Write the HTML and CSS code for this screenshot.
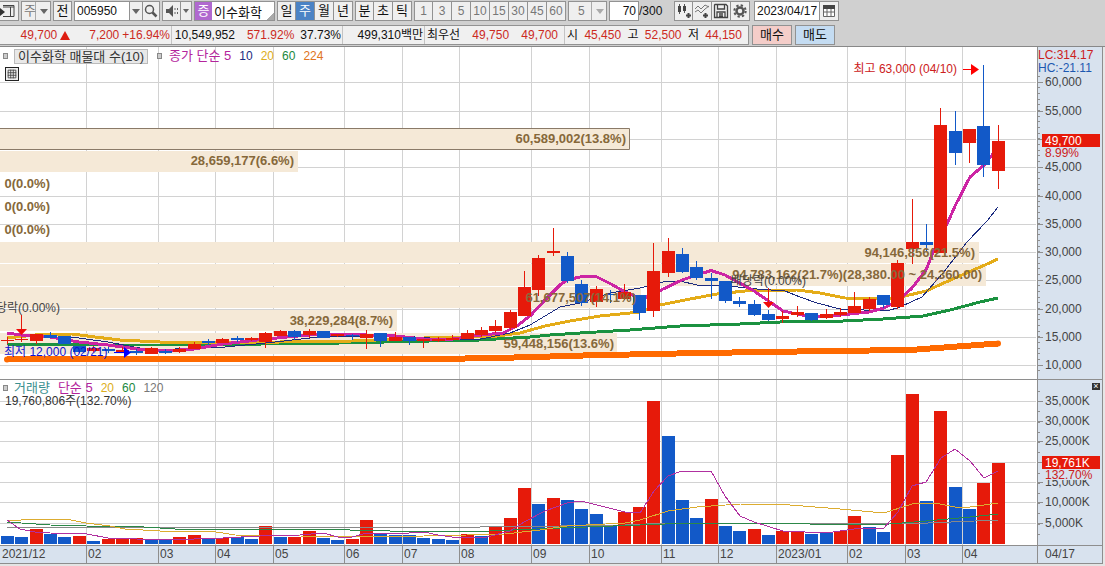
FILE: index.html
```html
<!DOCTYPE html>
<html lang="ko">
<head>
<meta charset="utf-8">
<title>이수화학 주봉 차트</title>
<link rel="stylesheet" href="styles.css">
</head>
<body>
<header class="toolbar">
  <button class="tool first" aria-label="패널"><svg width="18" height="16" viewBox="0 0 18 16"><path d="M3 2.5h11v11H3M3 4h11M10.5 4v9" fill="none" stroke="#444"/><path d="M0 5l5 4-5 4z" fill="#333"/></svg></button>
  <span class="combo period"><select aria-label="주기"><option>주</option></select><i class="arrow"></i></span>
  <button class="tool">전</button>
  <span class="group">
    <input class="field code" value="005950" aria-label="종목코드">
    <button class="drop" aria-label="종목 목록"><i class="arrow"></i></button>
    <button class="tool" aria-label="검색"><svg width="16" height="16" viewBox="0 0 16 16" fill="none" stroke="#555"><circle cx="6.500" cy="6.500" r="4" stroke-width="1.500"/><path d="M9.500 9.500l4 4" stroke-width="2.500"/></svg></button>
  </span>
  <span class="group">
    <button class="tool" aria-label="소리"><svg width="16" height="16" viewBox="0 0 16 16"><path d="M2 6h3l4-4v12l-4-4H2z" fill="#555"/><path d="M11 5v2M11 9v2M13.500 5v2M13.500 9v2" stroke="#666"/></svg></button>
    <button class="drop slim" aria-label="소리 설정"><i class="arrow"></i></button>
  </span>
  <span class="group name">
    <b class="badge">증</b>
    <input class="field" value="이수화학" aria-label="종목명">
  </span>
  <span class="group cells">
    <button>일</button><button class="on">주</button><button>월</button><button>년</button>
  </span>
  <span class="group cells">
    <button>분</button><button>초</button><button>틱</button>
  </span>
  <span class="group cells dim">
    <button>1</button><button>3</button><button>5</button><button>10</button><button>15</button><button>30</button><button>45</button><button>60</button>
  </span>
  <span class="combo minutes"><select aria-label="분 단위" disabled><option>5</option></select><i class="arrow"></i></span>
  <label class="count"><input class="field" value="70" aria-label="봉 개수">/300</label>
  <span class="group icons">
    <button class="tool" aria-label="봉 추가"><svg width="16" height="16" viewBox="0 0 16 16"><path d="M3.500 1v10M8.500 1v9" stroke="#555"/><path d="M2 3h3v6H2zM7 3h3v5H7z" fill="#444"/><path d="M10 12.500h5M12.500 10v5" stroke="#444" stroke-width="2"/></svg></button>
    <button class="tool" aria-label="지표 추가"><svg width="16" height="16" viewBox="0 0 16 16" fill="none"><path d="M1 6l3-3 3 3 4-4 4 2M1 9l3-2 3 3 4-4 4-3" stroke="#777"/><path d="M9 12.500h5M11.500 10v5" stroke="#444" stroke-width="2"/></svg></button>
    <button class="tool" aria-label="저장"><svg width="16" height="16" viewBox="0 0 16 16" fill="none" stroke="#444"><path d="M2 1.500h11l1.500 1.500v11.500h-13V2zM4.500 2v4h7V2M4 14.500V9h8v5.500M6 11h4M6 13h4" stroke-width="1.300"/></svg></button>
    <button class="tool" aria-label="설정"><svg width="16" height="16" viewBox="0 0 16 16" fill="none" stroke="#555"><circle cx="8" cy="8" r="3.500" stroke-width="2.500"/><circle cx="8" cy="8" r="5.700" stroke-width="2" stroke-dasharray="2.300 2.176"/></svg></button>
  </span>
  <span class="group">
    <input class="field date" value="2023/04/17" aria-label="날짜">
    <button class="tool" aria-label="달력"><svg width="16" height="16" viewBox="0 0 16 16"><path d="M2.500 3.500h11v10h-11zM6 5v8M10 5v8M3 9h10" fill="#fff" stroke="#666"/><path d="M2 2h12v4H2z" fill="#444"/></svg></button>
  </span>
</header>

<section class="quote">
  <div class="ticker">
    <div class="cell c1"><span class="up last">49,700</span><i class="rise"></i><span class="up diff">7,200</span><span class="up">+16.94%</span></div>
    <div class="cell c2"><span class="vol">10,549,952</span><span class="up">571.92%</span><span>37.73%</span></div>
    <div class="cell c3"><span>499,310백만</span></div>
    <div class="cell c4"><span>최우선</span><span class="up">49,750</span><span class="up">49,700</span></div>
    <div class="cell c5"><span>시</span><span class="up">45,450</span><span>고</span><span class="up">52,500</span><span>저</span><span class="up">44,150</span></div>
  </div>
  <button class="trade buy">매수</button>
  <button class="trade sell">매도</button>
</section>

<main class="chart">
  <svg id="plot" class="plot" viewBox="0 47 1105 517" role="img" aria-label="이수화학 주봉 가격과 거래량"></svg>
  <div class="legend price-legend">
    <i class="mark"></i><span class="profile">이수화학 매물대 수(10)</span><i class="mark"></i>
    <span class="m5">종가 단순 5</span><span class="m10">10</span><span class="m20">20</span><span class="m60">60</span><span class="m224">224</span>
  </div>
  <button class="grid-button" aria-label="표 보기"><svg width="14" height="14" viewBox="0 0 14 14"><path d="M2.500 2.500h9v9h-9zM2 5.500h10M2 8.500h10M5.500 2v10M8.500 2v10" fill="none" stroke="#444"/></svg></button>
  <div class="legend volume-legend">
    <i class="mark"></i><span class="vtitle">거래량</span>
    <span class="m5">단순 5</span><span class="m20">20</span><span class="m60">60</span><span class="m120">120</span>
  </div>
  <div class="volume-now">19,760,806주(132.70%)</div>
  <button class="close" aria-label="닫기">×</button>
</main>
<footer class="foot"></footer>
<script src="chart.js"></script>
</body>
</html>
```
FILE: styles.css
```css
* { box-sizing: border-box; }
body {
  margin: 0;
  background: #d0d0d0;
  color: #111;
  font: 13px/16px "Liberation Sans", "Noto Sans CJK KR", sans-serif;
}
button, input, select { font: inherit; color: inherit; margin: 0; padding: 0; border-radius: 0; }
i { font-style: normal; }

.toolbar { display: flex; align-items: center; gap: 2px; height: 24px; padding-bottom: 2px; }
.group { display: flex; }
.tool, .drop, .cells button {
  display: flex; align-items: center; justify-content: center;
  width: 19px; height: 20px;
  border: 1px solid #929292; background: #efefef;
}
.tool + .tool, .cells button + button, .field + .tool { border-left: 0; }
.first { border-left: 0; }
.drop { width: 14px; }
.slim { width: 11px; border-left: 0; }
.group .drop + .tool { width: 17px; border-left: 0; }
.arrow { width: 0; height: 0; border: 4px solid transparent; border-top: 5px solid #666; border-bottom: 0; }
.slim .arrow { border-width: 4px 3px 0; }
.combo { position: relative; display: flex; height: 20px; }
.combo select { appearance: none; border: 1px solid #929292; background: linear-gradient(90deg, #efefef calc(100% - 15px), #aaa calc(100% - 15px), #aaa calc(100% - 14px), #efefef calc(100% - 14px)); color: #777; padding-left: 2px; opacity: 1; }
.combo .arrow { position: absolute; right: 3px; top: 8px; }
.period select { width: 30px; }
.minutes select { width: 39px; padding-left: 9px; font-size: 12px; }
.minutes .arrow { border-top-color: #aaa; }
.field { height: 20px; border: 1px solid #929292; background: #fff; padding: 0 2px; min-width: 0; }
.code { width: 55px; border-right: 0; font-size: 12px; }
.name { width: 81px; border: 1px solid #929292; background: #fff; }
.name .field { border: 0; height: 18px; width: 62px; background: linear-gradient(135deg, #fff 91%, #aaa 91%); }
.badge { width: 17px; background: #b069cf; color: #fff; font-weight: 400; text-align: center; line-height: 18px; }
.cells .on { background: #4b83c5; color: #fff; }
.dim { color: #777; font-size: 12px; }
.dim button { color: inherit; }
.count { display: flex; align-items: center; width: 63px; font-size: 12px; }
.count .field { width: 30px; text-align: right; }
.icons { margin-right: 2px; }
.date { width: 66px; font-size: 12px; }

.quote { display: flex; gap: 3px; height: 22px; padding: 1px 0 1px; }
.ticker { display: flex; width: 749px; border: 1px solid #929292; border-left: 0; background: #f0f0f0; white-space: nowrap; font-size: 12px; }
.cell { display: flex; align-items: center; justify-content: flex-end; gap: 6px; padding-right: 1px; border-right: 1px solid #c4c4c4; }
.cell:last-child { border-right: 0; }
.up { color: #cc2a1e; }
.rise { width: 0; height: 0; border: 5px solid transparent; border-bottom: 9px solid #dd1c10; border-top: 0; }
.c1 { width: 172px; gap: 3px; }
.c1 .diff { width: 46px; text-align: right; }
.c2 { width: 171px; }
.c2 .vol { margin-right: 6px; }
.c3 { width: 82px; }
.c4 { width: 140px; padding: 0 6px 0 2px; justify-content: space-between; }
.c5 { flex: 1; justify-content: space-between; padding: 0 6px 0 2px; }
.trade { width: 40px; border: 1px solid #929292; }
.buy { background: #f4cdc9; }
.sell { background: #c4dcf2; }

.chart { position: relative; border-top: 1px solid #888; background: #fff; }
.plot { display: block; width: 100%; height: auto; }
.plot text { font: 12px "Liberation Sans", "Noto Sans CJK KR", sans-serif; }
.plot .axis { fill: #444; }
.plot .red { fill: #cc2020; }
.plot .blue { fill: #1c58b0; }
.plot .white { fill: #fff; }
.plot .profile-text { fill: #86683a; font-size: 13px; font-weight: 700; text-anchor: end; }
.plot .end { text-anchor: end; }
.legend { position: absolute; left: 3px; display: flex; align-items: center; gap: 8px; }
.price-legend { top: 1px; }
.volume-legend { top: 333px; }
.mark { width: 5px; height: 6px; border: 1px solid #888; background: #ccc; }
.price-legend .profile { margin-left: -2px; padding: 0 3px; margin-right: 1px; border: 1px solid #bbb; background: #e8e8e8; line-height: 13px; color: #333; }
.price-legend .m5 { margin-left: -1px; }
.volume-legend .vtitle { margin-left: -2px; color: #3a9090; }
.m5 { color: #b4249c; }
.m10 { color: #1c2c80; }
.m20 { color: #dcae20; }
.m60 { color: #1a8840; }
.m224 { color: #e07420; }
.m120 { color: #777; }
.m10, .m20, .m60, .m224, .m120 { font-size: 12px; }
.grid-button { position: absolute; left: 5px; top: 20px; width: 14px; height: 14px; border: 1px solid #222; background: #eee; display: flex; align-items: center; justify-content: center; }
.volume-now { position: absolute; left: 5px; top: 346px; color: #333; font-size: 12px; }
.close { position: absolute; right: 5px; top: 336px; width: 8px; height: 7px; border: 0; background: #333; color: #fff; font-size: 9px; line-height: 7px; }
.foot { height: 2px; background: #e4e4e4; }
```
FILE: chart.js
```js
const RED = '#e61a0a', BLUE = '#1259c8', GRID = '#d2d2d2', EDGE = '#8e8e8e', PANEL = '#d8e2ee', BAND = '#f5e9d7';
const out = [];
const cx = i => Math.round(7 + i * 14.36);
const rect = (x, y, w, h, fill) => out.push(`<rect x="${x}" y="${y}" width="${w}" height="${h}" fill="${fill}"/>`);
const text = (x, y, s, cls = '', fill = '') => out.push(`<text x="${x}" y="${y}" class="${cls}" ${fill && `fill="${fill}"`}>${s}</text>`);
const line = (pts, color, w) => out.push(`<polyline points="${pts}" fill="none" stroke="${color}" stroke-width="${w}" stroke-linejoin="round" shape-rendering="crispEdges"/>`);

// Panels and grid
rect(0, 47, 1037, 498, '#fff');
rect(1037, 47, 65, 517, PANEL);
rect(0, 546, 1102, 18, PANEL);
rect(1102, 47, 3, 517, '#e6e6e6');
const months = [[0, '2021/12'], [86, '02'], [158, '03'], [215, '04'], [273, '05'], [344, '06'], [402, '07'], [459, '08'], [531, '09'], [589, '10'], [661, '11'], [718, '12'], [776, '2023/01'], [847, '02'], [905, '03'], [962, '04']];
const priceY = [82, 111, 139, 167, 196, 224, 252, 280, 309, 337, 365];
const volumeY = [401, 421, 441, 462, 482, 502, 523];
priceY.concat(volumeY).forEach(y => rect(0, y, 1036, 1, GRID));
months.slice(1).forEach(([x]) => rect(x, 47, 1, 498, GRID));

// Volume profile bands
[[128, 630], [151, 298], [242, 979], [264, 986], [287, 641], [310, 397], [333, 617]].forEach(([y, w]) => rect(0, y, w, y === 264 ? 22 : 21, BAND));
out.push('<path d="M0 128.5H629.5V149.5H0" fill="none" stroke="#8a7a68"/>');

// Moving averages
line('7,359.5 440,359 540,357 560,356 700,353 830,351 910,350 998,343.5', '#ff6a00', 6);
out.push('<circle cx="7" cy="359.5" r="3" fill="#ff6a00"/><circle cx="998" cy="343.5" r="3" fill="#ff6a00"/>');
line('7,344 100,345 190,345 262,344 340,343 430,341 480,340 530,337 550,335 580,333 630,330 680,326 740,324 780,322 833,321.5 883,319 923,316 950,310 980,302 998,298', '#1b9240', 3);
line('7,338 35,335 72,334 95,337 120,340 160,342 194,343 280,342 352,341 424,338 467,337 497,336 520,333 545,326 570,321 600,316 640,312 660,305 690,299 717,294 745,291 797,290 820,293 845,298 885,299 905,296 926,291 955,278 985,265 998,259', '#e4ac18', 3);
line('64,336 108,342 150,350 200,348 225,347 266,343 310,338 340,336 400,336 430,338 460,340 481,339 510,333 530,325 560,307 580,303 610,293 640,288 663,282 680,281 697,285 718,285 757,289 785,291 800,297 817,303 840,309 887,311 900,307 922,297 943,273 967,242 987,221 998,207', '#1c2c80', 1);
line('7,333 21,335 50,337 79,342 108,345 137,349 165,351 194,349 223,344 266,339 309,335 352,334.5 395,336 424,339 453,339 481,335 503,333 517,326 531,315 545,300 560,285 567,280 582,276.5 597,277 611,284 625,292 639,298 654,296 661,290 682,280 697,275 711,270.5 725,275 754,291 783,311 797,314 812,317 840,315 869,312 884,308 898,301 912,288 926,270 934,250 948,222 955,206 970,177 984,165 998,148', '#cc24a4', 3);

// Candles: body top, body bottom, high, low; fifth value marks a falling week
const candles = [[340,341,337,344],[339,340,337,342],[334,341,334,344],[335,338,332,338,1],[336,344,336,344,1],[346,352,346,353,1],[348,351,346,352],[349,351,347,353,1],[350,352,347,353],[351,353,349,355,1],[348,354,347,354],[351,353,349,354,1],[349,352,347,353],[344,349,342,349],[341,343,339,345,1],[339,343,338,343],[338,340,336,342,1],[338,340,337,341],[333,342,332,348],[331,336,330,336],[331,337,330,340,1],[331,335,329,338],[331,338,331,338,1],[334,336,334,337],[335,336,334,340,1],[334,338,330,349],[333,341,333,347,1],[337,341,332,341],[337,341,337,345,1],[339,341,339,348],[339,341,337,342],[338,340,335,340],[333,339,330,339],[330,335,327,337],[326,331,320,333],[312,328,310,330],[287,316,271,316],[258,290,255,296],[251,253,228,256],[256,281,252,283,1],[284,303,280,306,1],[289,302,286,307],[294,295,290,303,1],[292,299,284,300],[295,313,295,320,1],[271,311,243,317],[251,273,238,277],[254,272,248,273,1],[267,278,261,280,1],[278,281,273,299,1],[281,301,281,303,1],[301,304,297,307,1],[304,315,300,316,1],[314,320,310,321,1],[316,319,311,323],[312,315,306,317],[313,320,313,321,1],[314,318,309,319],[312,315,308,317],[306,313,292,313],[299,309,297,311],[295,305,295,308,1],[263,307,260,309],[242,249,199,264],[242,245,224,252,1],[125,253,108,253],[131,153,111,165,1],[129,143,129,163],[126,165,65,177,1],[141,171,125,189]];
candles.forEach(([a, b, hi, lo, down], i) => {
  const c = down ? BLUE : RED;
  rect(cx(i), hi, 1, lo - hi, c);
  rect(cx(i) - 6, a, 13, b - a, c);
});

// Profile labels
[[626, 143, '60,589,002(13.8%)'], [294, 165, '28,659,177(6.6%)'], [50, 188, '0(0.0%)'], [50, 211, '0(0.0%)'], [50, 234, '0(0.0%)'], [975, 257, '94,146,856(21.5%)'], [982, 279, '94,783,162(21.7%)(28,380.00 ~ 24,360.00)'], [636, 302, '61,677,507(14.1%)'], [393, 325, '38,229,284(8.7%)'], [614, 348, '59,448,156(13.6%)']].forEach(([x, y, s]) => text(x, y, s, 'profile-text'));

// Event and extreme markers
text(60, 312, '배당락(0.00%)', 'end', '#444');
text(806, 285, '배당락(0.00%)', 'end', '#444');
out.push(`<path d="M21.5 315V330M768.5 288V303" stroke="${RED}"/><path d="M16 329H27L21.5 335ZM763 302H774L768.5 308Z" fill="#f00a0a"/>`);
text(4, 356, '최저 12,000 (02/21)', '', '#1010d0');
out.push('<path d="M114 352.5H125" stroke="#00f"/><path d="M124 347V358L131 352.5Z" fill="#00f"/>');
text(957, 73, '최고 63,000 (04/10)', 'end', '#cc2020');
out.push('<path d="M963 69.5H973" stroke="#f00"/><path d="M971 64V75L979 69.5Z" fill="#f00"/>');

// Volume bars: top edge, negative for a falling week
const bars = [-536,-537,529,-534,-537,536,-541,539,538,538,-540,-540,537,535,-538,538,-537,-539,526,-537,537,531,-538,-540,539,520,-533,-535,-535,-538,-539,-540,534,-536,526,518,488,-504,498,-500,-509,-514,-525,512,507,401,-436,-500,-518,499,-526,-531,529,-535,531,531,-534,-533,531,516,-527,-532,455,394,-501,411,-487,-509,483,463];
bars.forEach((v, i) => rect(cx(i) - 6, Math.abs(v), 13, 544 - Math.abs(v), v < 0 ? BLUE : RED));
line('7,528 270,527 480,527 560,526 625,525 668,523 780,523 905,524 998,520', '#888', 1);
line('7,522 50,525 86,526 144,527 175,529 350,530 430,532 490,531 560,528 640,525 690,523 790,523 830,525 890,524 926,521 970,517 998,514', '#2c8848', 1);
line('7,520 15,521 28,519 66,519 86,523 110,526 125,529 160,531 210,531 235,535 300,536 352,537 424,536 467,535 505,534 540,530 567,526 625,523 640,520 668,511 697,507 740,504 790,505 840,509 884,513 912,504 935,503 955,507 970,507 998,503', '#dcac30', 1);
line('7,520 20,529 35,532 50,533 87,534 108,538 137,539 194,539 223,538 260,536 300,535 323,533 338,537 352,537 367,533 395,534 424,532 438,535 452,537 487,537 510,531 524,522 545,511 567,503 581,501 625,512 640,513 654,491 668,476 682,471 697,472 711,471 725,496 740,516 754,522 783,531 826,533 854,529 884,528 898,512 912,486 926,482 941,458 955,449 970,461 984,478 998,471', '#b030a0', 1);

// Axes
rect(0, 379, 1102, 1, EDGE);
rect(0, 545, 1102, 1, EDGE);
rect(0, 563, 1102, 1, EDGE);
rect(1037, 47, 1, 517, EDGE);
rect(1102, 47, 1, 517, EDGE);
months.forEach(([x, s]) => {
  if (x) rect(x, 545, 1, 18, EDGE);
  text(x + 2, 558, s, 'axis');
});
text(1045, 558, '04/17', 'axis');
for (let k = 0; k < 53; k++) rect(1038, Math.round(76 + k * 5.66), 2, 1, EDGE);
for (let k = 0; k < 15; k++) rect(1038, Math.round(391 + k * 10.2), 2, 1, EDGE);
priceY.forEach((y, i) => {
  rect(1038, y, 5, 1, EDGE);
  text(1045, y + 4, (60 - i * 5) + ',000', 'axis');
});
volumeY.forEach((y, i) => {
  rect(1038, y, 5, 1, EDGE);
  if (i !== 3) text(1045, y + 4, (35 - i * 5) + ',000K', 'axis');
});
text(1038, 59, 'LC:314.17', 'axis red');
text(1038, 72, 'HC:-21.11', 'axis blue');
[[134, '49,700', '8.99%'], [456, '19,761K', '132.70%']].forEach(([y, now, rate]) => {
  rect(1044, y + 12, 56, 12, PANEL);
  rect(1042, y, 58, 13, RED);
  text(1045, y + 11, now, 'axis white');
  text(1045, y + 23, rate, 'axis red');
});
document.getElementById('plot').innerHTML = out.join('');
```
